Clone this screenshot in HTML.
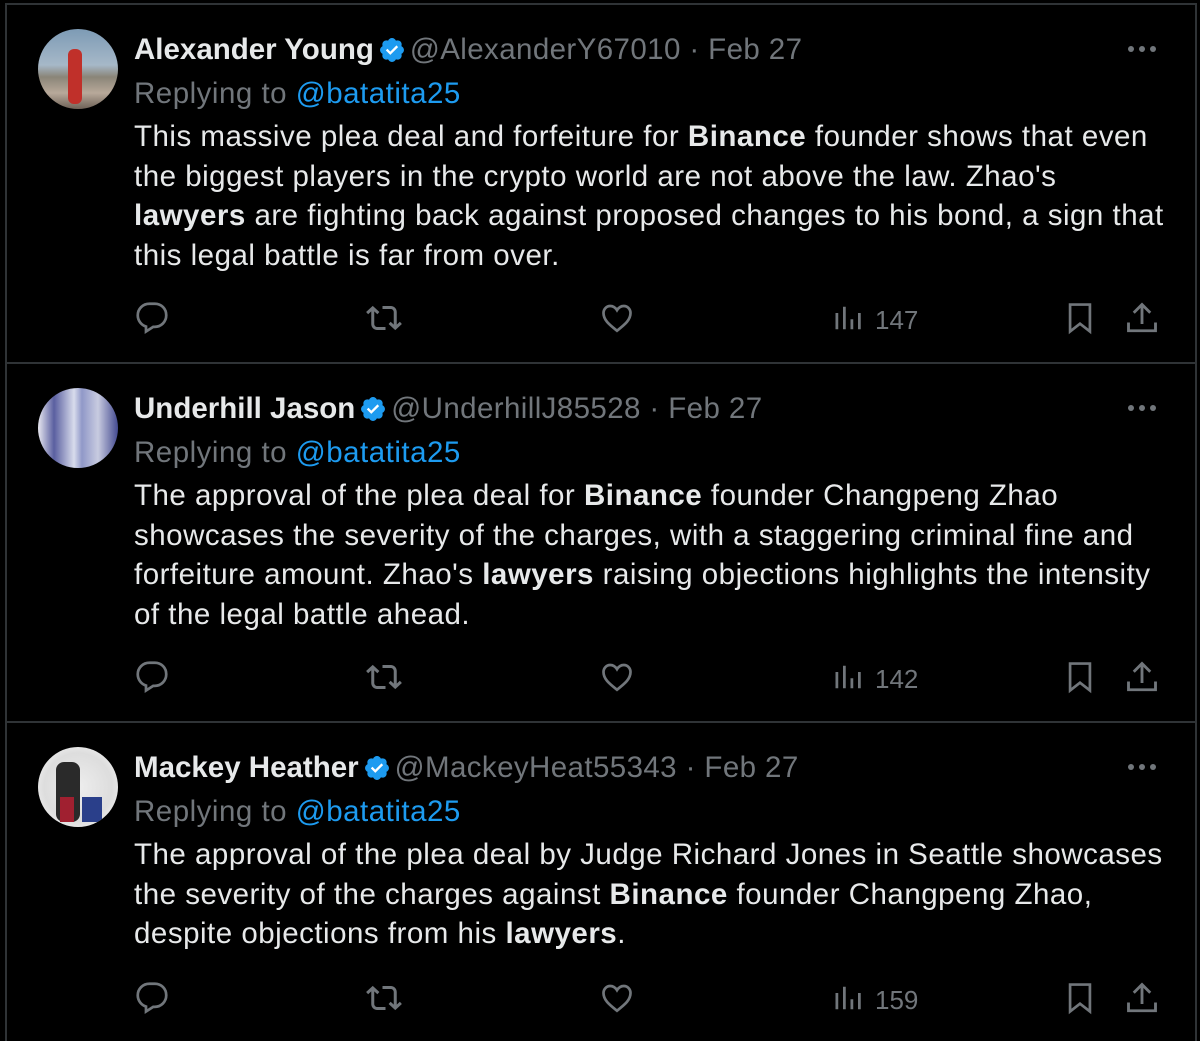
<!DOCTYPE html>
<html><head><meta charset="utf-8"><style>
html,body{margin:0;height:1041px;overflow:hidden}
body{background:#000;width:1200px;font-family:"Liberation Sans",sans-serif;position:relative}
.frame{position:absolute;left:5px;top:3px;width:1188px;height:1040px;border:2px solid #2f3336;border-bottom:none}
.sep{position:absolute;left:5px;width:1190px;height:2px;background:#2f3336}
.tw{position:absolute;left:0;width:1200px;height:359px}
.av{position:absolute;left:38px;top:29px;width:80px;height:80px;border-radius:50%;overflow:hidden}
.hd{position:absolute;left:134px;top:31px;font-size:29.5px;letter-spacing:0.4px;white-space:nowrap;color:#71767b;line-height:38px}
.hd b{color:#e7e9ea;letter-spacing:0}
.badge{display:inline-block;vertical-align:-5px;margin:0 4px}
.rp{position:absolute;left:134px;top:75px;font-size:29.5px;letter-spacing:0.5px;color:#71767b;line-height:38px}
.rp span{color:#1d9bf0}
.tx{position:absolute;left:134px;top:117px;font-size:29.5px;color:#e7e9ea;line-height:39.6px;white-space:nowrap;letter-spacing:0.5px}
.dots{position:absolute;left:1127px;top:44px}
.act{position:absolute;top:300px;left:0;width:1200px;height:40px;color:#71767b}
.act svg{position:absolute;top:0}
.vc{position:absolute;left:875px;top:5px;font-size:26px;color:#71767b}
</style></head><body>
<div class="frame"></div>
<div class="sep" style="top:362px"></div>
<div class="sep" style="top:721px"></div>

<div class="tw" style="top:0">
 <div class="av" style="background:linear-gradient(#7d9bb5 0%,#a6b8c8 45%,#8a8578 60%,#b8a99a 80%,#6e6257 100%)"><div style="position:absolute;left:30px;top:20px;width:14px;height:55px;background:#c0302a;border-radius:6px"></div></div>
 <div class="hd"><b>Alexander Young</b><svg class="badge" width="28" height="28" viewBox="0 0 24 24"><path fill="#1d9bf0" d="M22.25 12c0-1.43-.88-2.67-2.19-3.34.46-1.39.2-2.9-.81-3.91s-2.52-1.27-3.91-.81c-.66-1.31-1.91-2.19-3.34-2.19s-2.67.88-3.33 2.19c-1.4-.46-2.91-.2-3.92.81s-1.26 2.52-.8 3.91c-1.31.67-2.2 1.91-2.2 3.34s.89 2.67 2.2 3.34c-.46 1.39-.21 2.9.8 3.91s2.52 1.26 3.91.81c.67 1.31 1.91 2.19 3.34 2.19s2.68-.88 3.34-2.19c1.39.45 2.9.2 3.910-.81s1.27-2.52.81-3.91c1.31-.67 2.19-1.91 2.19-3.34z"/><path fill="#fff" d="M10.54 16.2l-3.84-3.84 1.42-1.42 2.42 2.42 5.28-5.28 1.42 1.42z"/></svg>@AlexanderY67010 · Feb 27</div>
 <div class="rp">Replying to <span>@batatita25</span></div>
 <div class="tx">This massive plea deal and forfeiture for <b>Binance</b> founder shows that even<br>the biggest players in the crypto world are not above the law. Zhao's<br><b>lawyers</b> are fighting back against proposed changes to his bond, a sign that<br>this legal battle is far from over.</div>
 <svg class="dots" width="30" height="10"><circle cx="4" cy="5" r="3" fill="#71767b"/><circle cx="15" cy="5" r="3" fill="#71767b"/><circle cx="26" cy="5" r="3" fill="#71767b"/></svg>
 <div class="act">
  <svg style="left:134px" width="36" height="36" viewBox="0 0 24 24" fill="none" stroke="#71767b" stroke-width="1.8"><path d="M2.5 10.2c0-4.3 3.4-7.7 7.8-7.7h3.6c4.4 0 7.6 3.4 7.6 7.7 0 4.3-3.4 7.7-7.7 7.7h-1L8 21v-3.3c-3.2-1-5.5-4-5.5-7.5z"/></svg>
  <svg style="left:365px" width="38" height="36" viewBox="0 0 24 24" fill="#71767b"><path d="M4.5 3.88l4.432 4.14-1.364 1.46L5.5 7.55V16c0 1.1.896 2 2 2H13v2H7.5c-2.209 0-4-1.79-4-4V7.55L1.432 9.48.068 8.02 4.5 3.88zM16.5 6H11V4h5.5c2.209 0 4 1.79 4 4v8.45l2.068-1.93 1.364 1.46-4.432 4.14-4.432-4.14 1.364-1.46 2.068 1.93V8c0-1.1-.896-2-2-2z"/></svg>
  <svg style="left:599px" width="36" height="36" viewBox="0 0 24 24" fill="none" stroke="#71767b" stroke-width="1.8"><path d="M12 20.5C7 16.5 3 13.5 3 8.7 3 6 5 4 7.5 4c2 0 3.5 1.2 4.5 2.8C13 5.2 14.5 4 16.5 4 19 4 21 6 21 8.7c0 4.8-4 7.8-9 11.8z"/></svg>
  <svg style="left:833px" width="30" height="36" viewBox="0 0 24 24" fill="#71767b"><rect x="2" y="8" width="2.2" height="13"/><rect x="8" y="3" width="2.2" height="18"/><rect x="14" y="13" width="2.2" height="8"/><rect x="20" y="8" width="2.2" height="13"/></svg>
  <div class="vc">147</div>
  <svg style="left:1063px" width="34" height="36" viewBox="0 0 24 24" fill="none" stroke="#71767b" stroke-width="1.9"><path d="M5 2.5h14v19l-7-5.5-7 5.5z"/></svg>
  <svg style="left:1124px" width="36" height="36" viewBox="0 0 24 24" fill="none" stroke="#71767b" stroke-width="1.9"><path d="M12 3v13M6.5 8.5 12 3l5.5 5.5M3 15v5.5h18V15"/></svg>
 </div>
</div>

<div class="tw" style="top:359px">
 <div class="av" style="background:linear-gradient(90deg,#e8e8f0 0%,#5a5fa0 20%,#d8dcec 45%,#9098c8 55%,#c8cbe0 75%,#444a90 100%)"></div>
 <div class="hd"><b>Underhill Jason</b><svg class="badge" width="28" height="28" viewBox="0 0 24 24"><path fill="#1d9bf0" d="M22.25 12c0-1.43-.88-2.67-2.19-3.34.46-1.39.2-2.9-.81-3.91s-2.52-1.27-3.91-.81c-.66-1.31-1.91-2.19-3.34-2.19s-2.67.88-3.33 2.19c-1.4-.46-2.91-.2-3.92.81s-1.26 2.52-.8 3.91c-1.31.67-2.2 1.91-2.2 3.34s.89 2.67 2.2 3.34c-.46 1.39-.21 2.9.8 3.91s2.52 1.26 3.91.81c.67 1.31 1.91 2.19 3.34 2.19s2.68-.88 3.34-2.19c1.39.45 2.9.2 3.91-.81s1.27-2.52.81-3.91c1.31-.67 2.19-1.91 2.19-3.34z"/><path fill="#fff" d="M10.54 16.2l-3.84-3.84 1.42-1.42 2.42 2.42 5.28-5.28 1.42 1.42z"/></svg>@UnderhillJ85528 · Feb 27</div>
 <div class="rp">Replying to <span>@batatita25</span></div>
 <div class="tx">The approval of the plea deal for <b>Binance</b> founder Changpeng Zhao<br>showcases the severity of the charges, with a staggering criminal fine and<br>forfeiture amount. Zhao's <b>lawyers</b> raising objections highlights the intensity<br>of the legal battle ahead.</div>
 <svg class="dots" width="30" height="10"><circle cx="4" cy="5" r="3" fill="#71767b"/><circle cx="15" cy="5" r="3" fill="#71767b"/><circle cx="26" cy="5" r="3" fill="#71767b"/></svg>
 <div class="act">
  <svg style="left:134px" width="36" height="36" viewBox="0 0 24 24" fill="none" stroke="#71767b" stroke-width="1.8"><path d="M2.5 10.2c0-4.3 3.4-7.7 7.8-7.7h3.6c4.4 0 7.6 3.4 7.6 7.7 0 4.3-3.4 7.7-7.7 7.7h-1L8 21v-3.3c-3.2-1-5.5-4-5.5-7.5z"/></svg>
  <svg style="left:365px" width="38" height="36" viewBox="0 0 24 24" fill="#71767b"><path d="M4.5 3.88l4.432 4.14-1.364 1.46L5.5 7.55V16c0 1.1.896 2 2 2H13v2H7.5c-2.209 0-4-1.79-4-4V7.55L1.432 9.48.068 8.02 4.5 3.88zM16.5 6H11V4h5.5c2.209 0 4 1.79 4 4v8.45l2.068-1.93 1.364 1.46-4.432 4.140-4.432-4.14 1.364-1.46 2.068 1.93V8c0-1.1-.896-2-2-2z"/></svg>
  <svg style="left:599px" width="36" height="36" viewBox="0 0 24 24" fill="none" stroke="#71767b" stroke-width="1.8"><path d="M12 20.5C7 16.5 3 13.5 3 8.7 3 6 5 4 7.5 4c2 0 3.5 1.2 4.5 2.8C13 5.2 14.5 4 16.5 4 19 4 21 6 21 8.7c0 4.8-4 7.8-9 11.8z"/></svg>
  <svg style="left:833px" width="30" height="36" viewBox="0 0 24 24" fill="#71767b"><rect x="2" y="8" width="2.2" height="13"/><rect x="8" y="3" width="2.2" height="18"/><rect x="14" y="13" width="2.2" height="8"/><rect x="20" y="8" width="2.2" height="13"/></svg>
  <div class="vc">142</div>
  <svg style="left:1063px" width="34" height="36" viewBox="0 0 24 24" fill="none" stroke="#71767b" stroke-width="1.9"><path d="M5 2.5h14v19l-7-5.5-7 5.5z"/></svg>
  <svg style="left:1124px" width="36" height="36" viewBox="0 0 24 24" fill="none" stroke="#71767b" stroke-width="1.9"><path d="M12 3v13M6.5 8.5 12 3l5.5 5.5M3 15v5.5h18V15"/></svg>
 </div>
</div>

<div class="tw" style="top:718px">
 <div class="av" style="background:radial-gradient(circle at 50% 50%,#eee 0%,#ddd 60%,#fff 100%)"><div style="position:absolute;left:18px;top:15px;width:24px;height:60px;background:#2a2a2a;border-radius:8px"></div><div style="position:absolute;left:22px;top:50px;width:14px;height:25px;background:#a02030"></div><div style="position:absolute;left:44px;top:50px;width:20px;height:25px;background:#2a3f8a"></div></div>
 <div class="hd"><b>Mackey Heather</b><svg class="badge" width="28" height="28" viewBox="0 0 24 24"><path fill="#1d9bf0" d="M22.25 12c0-1.43-.88-2.67-2.19-3.34.46-1.39.2-2.9-.81-3.91s-2.52-1.27-3.91-.81c-.66-1.31-1.91-2.19-3.34-2.19s-2.67.88-3.33 2.19c-1.4-.46-2.91-.2-3.92.81s-1.26 2.52-.8 3.91c-1.31.67-2.2 1.91-2.2 3.34s.89 2.67 2.2 3.34c-.46 1.39-.21 2.9.8 3.91s2.52 1.26 3.91.81c.67 1.31 1.91 2.19 3.34 2.19s2.68-.88 3.34-2.19c1.39.45 2.9.2 3.91-.81s1.27-2.52.81-3.91c1.31-.67 2.19-1.91 2.19-3.34z"/><path fill="#fff" d="M10.54 16.2l-3.84-3.84 1.42-1.42 2.42 2.42 5.28-5.28 1.42 1.42z"/></svg>@MackeyHeat55343 · Feb 27</div>
 <div class="rp">Replying to <span>@batatita25</span></div>
 <div class="tx">The approval of the plea deal by Judge Richard Jones in Seattle showcases<br>the severity of the charges against <b>Binance</b> founder Changpeng Zhao,<br>despite objections from his <b>lawyers</b>.</div>
 <svg class="dots" width="30" height="10"><circle cx="4" cy="5" r="3" fill="#71767b"/><circle cx="15" cy="5" r="3" fill="#71767b"/><circle cx="26" cy="5" r="3" fill="#71767b"/></svg>
 <div class="act" style="top:262px">
  <svg style="left:134px" width="36" height="36" viewBox="0 0 24 24" fill="none" stroke="#71767b" stroke-width="1.8"><path d="M2.5 10.2c0-4.3 3.4-7.7 7.8-7.7h3.6c4.4 0 7.6 3.4 7.6 7.7 0 4.3-3.4 7.7-7.7 7.7h-1L8 21v-3.3c-3.2-1-5.5-4-5.5-7.5z"/></svg>
  <svg style="left:365px" width="38" height="36" viewBox="0 0 24 24" fill="#71767b"><path d="M4.5 3.88l4.432 4.14-1.364 1.46L5.5 7.55V16c0 1.1.896 2 2 2H13v2H7.5c-2.209 0-4-1.79-4-4V7.55L1.432 9.48.068 8.02 4.5 3.88zM16.5 6H11V4h5.5c2.209 0 4 1.79 4 4v8.45l2.068-1.93 1.364 1.46-4.432 4.14-4.432-4.14 1.364-1.46 2.068 1.93V8c0-1.1-.896-2-2-2z"/></svg>
  <svg style="left:599px" width="36" height="36" viewBox="0 0 24 24" fill="none" stroke="#71767b" stroke-width="1.8"><path d="M12 20.5C7 16.5 3 13.5 3 8.7 3 6 5 4 7.5 4c2 0 3.5 1.2 4.5 2.8C13 5.2 14.5 4 16.5 4 19 4 21 6 21 8.7c0 4.8-4 7.8-9 11.8z"/></svg>
  <svg style="left:833px" width="30" height="36" viewBox="0 0 24 24" fill="#71767b"><rect x="2" y="8" width="2.2" height="13"/><rect x="8" y="3" width="2.2" height="18"/><rect x="14" y="13" width="2.2" height="8"/><rect x="20" y="8" width="2.2" height="13"/></svg>
  <div class="vc">159</div>
  <svg style="left:1063px" width="34" height="36" viewBox="0 0 24 24" fill="none" stroke="#71767b" stroke-width="1.9"><path d="M5 2.5h14v19l-7-5.5-7 5.5z"/></svg>
  <svg style="left:1124px" width="36" height="36" viewBox="0 0 24 24" fill="none" stroke="#71767b" stroke-width="1.9"><path d="M12 3v13M6.5 8.5 12 3l5.5 5.5M3 15v5.5h18V15"/></svg>
 </div>
</div>
</body></html>
